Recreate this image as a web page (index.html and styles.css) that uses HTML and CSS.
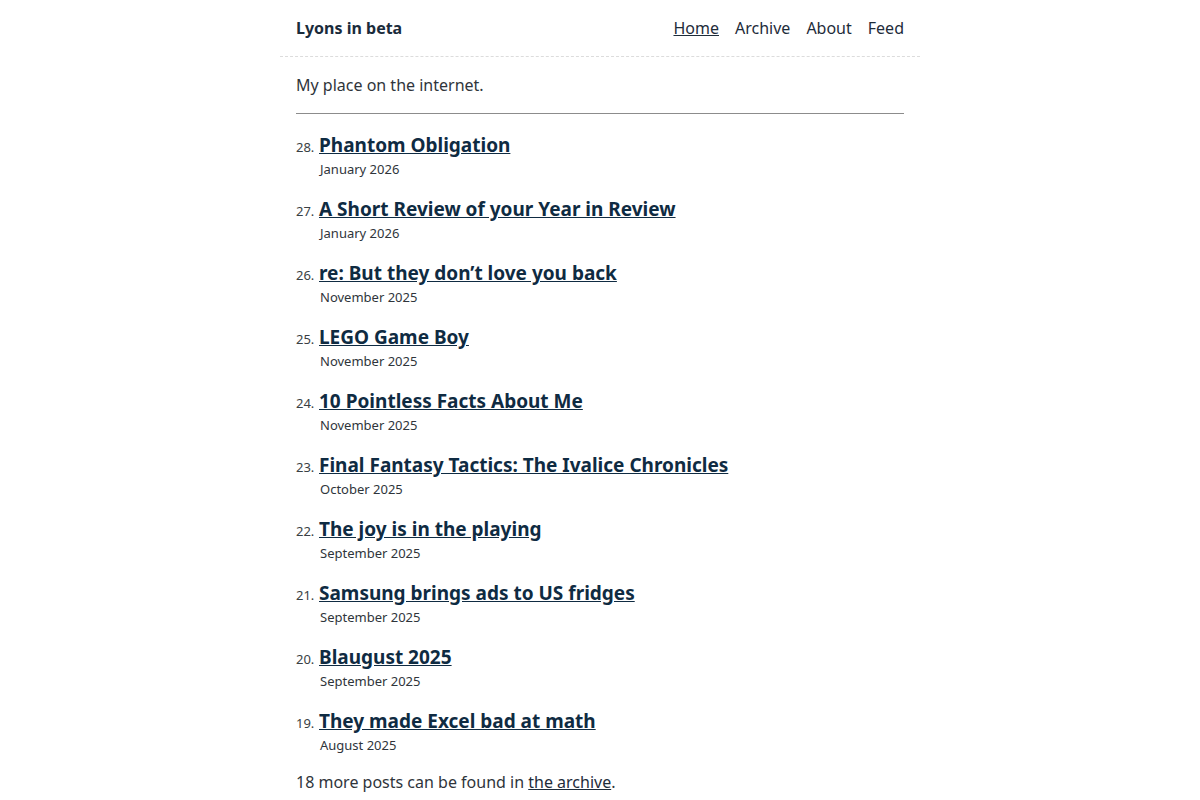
FILE: index.html
```html
<!DOCTYPE html>
<html lang="en">
<head>
<meta charset="utf-8">
<title>Lyons in beta</title>
<link rel="stylesheet" href="styles.css">
</head>
<body>
<div class="page">
  <header class="site-header">
    <a class="brand" href="#">Lyons in beta</a>
    <nav class="nav">
      <a class="nav-link active" href="#">Home</a>
      <a class="nav-link" href="#">Archive</a>
      <a class="nav-link" href="#">About</a>
      <a class="nav-link" href="#">Feed</a>
    </nav>
  </header>
  <main class="content">
    <p class="tagline">My place on the internet.</p>
    <hr class="rule">
    <ol class="posts">
      <li class="post"><span class="num">28.</span><a class="title" href="#">Phantom Obligation</a><span class="date">January 2026</span></li>
      <li class="post"><span class="num">27.</span><a class="title" href="#">A Short Review of your Year in Review</a><span class="date">January 2026</span></li>
      <li class="post"><span class="num">26.</span><a class="title" href="#">re: But they don’t love you back</a><span class="date">November 2025</span></li>
      <li class="post"><span class="num">25.</span><a class="title" href="#">LEGO Game Boy</a><span class="date">November 2025</span></li>
      <li class="post"><span class="num">24.</span><a class="title" href="#">10 Pointless Facts About Me</a><span class="date">November 2025</span></li>
      <li class="post"><span class="num">23.</span><a class="title" href="#">Final Fantasy Tactics: The Ivalice Chronicles</a><span class="date">October 2025</span></li>
      <li class="post"><span class="num">22.</span><a class="title" href="#">The joy is in the playing</a><span class="date">September 2025</span></li>
      <li class="post"><span class="num">21.</span><a class="title" href="#">Samsung brings ads to US fridges</a><span class="date">September 2025</span></li>
      <li class="post"><span class="num">20.</span><a class="title" href="#">Blaugust 2025</a><span class="date">September 2025</span></li>
      <li class="post"><span class="num">19.</span><a class="title" href="#">They made Excel bad at math</a><span class="date">August 2025</span></li>
    </ol>
    <p class="more">18 more posts can be found in <a href="#">the archive</a>.</p>
  </main>
</div>
</body>
</html>
```
FILE: styles.css
```css
html, body {
  margin: 0;
  padding: 0;
  background: #ffffff;
}
body {
  font-family: "Noto Sans", "DejaVu Sans", sans-serif;
  font-size: 16px;
  line-height: 24px;
  color: #2f353b;
}
a {
  color: #0f2b42;
}
.page {
  width: 640px;
  margin: 0 auto;
}
.site-header {
  height: 56px;
  padding: 0 16px;
  display: flex;
  align-items: center;
  justify-content: space-between;
  border-bottom: 1px dashed #dcdcdc;
}
.brand {
  font-weight: 700;
  text-decoration: none;
  color: #1a2b3b;
}
.nav {
  display: flex;
  gap: 16px;
}
.nav-link {
  color: #1e2c3a;
  text-decoration: none;
}
.nav-link.active {
  text-decoration: underline;
}
.content {
  padding: 0 16px;
}
.tagline {
  margin: 16px 0 0;
}
.rule {
  margin: 16px 0 0;
  border: 0;
  height: 1px;
  background: #8c8c8c;
}
.posts {
  list-style: none;
  margin: 16px 0 0;
  padding: 0;
}
.post {
  display: grid;
  grid-template-columns: 23px 1fr;
  align-items: baseline;
  margin-bottom: 16px;
}
.num {
  font-size: 13px;
  color: #3a3f44;
}
.title {
  font-size: 19px;
  line-height: 30px;
  font-weight: 700;
  color: #0f2b42;
  justify-self: start;
}
.date {
  grid-column: 2;
  padding-left: 1px;
  font-size: 13px;
  line-height: 18px;
  color: #2f353b;
}
.more {
  margin: 1px 0 0;
}
.more a {
  color: #1e2c3a;
}
```
